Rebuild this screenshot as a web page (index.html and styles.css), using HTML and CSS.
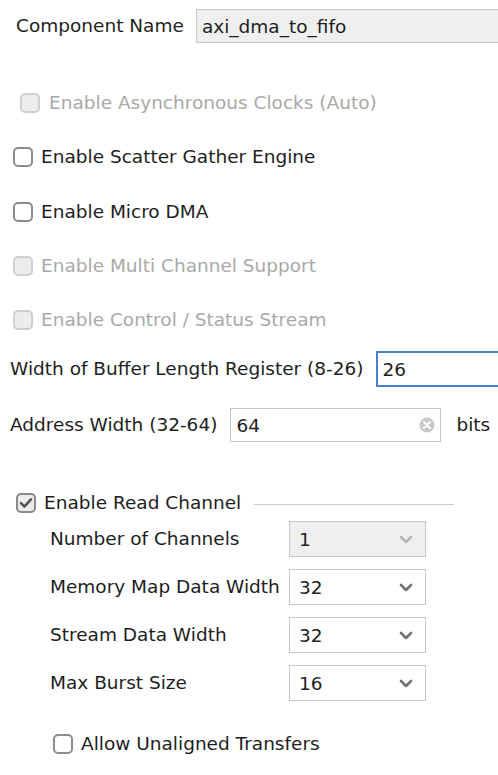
FILE: index.html
```html
<!DOCTYPE html>
<html>
<head>
<meta charset="utf-8">
<link rel="stylesheet" href="styles.css">
</head>
<body>
<div class="page">
  <div class="row name-row">
    <span class="label">Component Name</span>
    <div class="field name-field">axi_dma_to_fifo</div>
  </div>

  <div class="row check-row async">
    <span class="cb disabled"></span><span class="label disabled-text">Enable Asynchronous Clocks (Auto)</span>
  </div>
  <div class="row check-row scatter">
    <span class="cb"></span><span class="label">Enable Scatter Gather Engine</span>
  </div>
  <div class="row check-row micro">
    <span class="cb"></span><span class="label">Enable Micro DMA</span>
  </div>
  <div class="row check-row multi">
    <span class="cb disabled"></span><span class="label disabled-text">Enable Multi Channel Support</span>
  </div>
  <div class="row check-row control">
    <span class="cb disabled"></span><span class="label disabled-text">Enable Control / Status Stream</span>
  </div>

  <div class="row buffer-row">
    <span class="label">Width of Buffer Length Register (8-26)</span>
    <div class="field focus-field">26</div>
  </div>

  <div class="row addr-row">
    <span class="label">Address Width (32-64)</span>
    <div class="field addr-field">
      <span>64</span>
      <svg class="clear" width="16" height="16" viewBox="0 0 16 16"><circle cx="8" cy="8" r="7.5" fill="#c9c9c9"/><path d="M5 5 L11 11 M11 5 L5 11" stroke="#fff" stroke-width="2" stroke-linecap="round"/></svg>
    </div>
    <span class="label unit">bits</span>
  </div>

  <div class="row check-row read-row">
    <span class="cb checked"><svg width="20" height="20" viewBox="0 0 20 20"><path d="M5 10.2 L8.4 13.6 L15 6.4" fill="none" stroke="#555" stroke-width="2.6" stroke-linecap="round" stroke-linejoin="round"/></svg></span><span class="label">Enable Read Channel</span>
    <span class="rule"></span>
  </div>

  <div class="sub">
    <div class="row sel-row first">
      <span class="label sub-label">Number of Channels</span>
      <div class="select disabled-select"><span>1</span><svg class="chev" width="14" height="9" viewBox="0 0 14 9"><path d="M2 2 L7 7 L12 2" fill="none" stroke="#b4b4b4" stroke-width="2.6" stroke-linecap="round" stroke-linejoin="round"/></svg></div>
    </div>
    <div class="row sel-row">
      <span class="label sub-label">Memory Map Data Width</span>
      <div class="select"><span>32</span><svg class="chev" width="14" height="9" viewBox="0 0 14 9"><path d="M2 2 L7 7 L12 2" fill="none" stroke="#707070" stroke-width="2.6" stroke-linecap="round" stroke-linejoin="round"/></svg></div>
    </div>
    <div class="row sel-row">
      <span class="label sub-label">Stream Data Width</span>
      <div class="select"><span>32</span><svg class="chev" width="14" height="9" viewBox="0 0 14 9"><path d="M2 2 L7 7 L12 2" fill="none" stroke="#707070" stroke-width="2.6" stroke-linecap="round" stroke-linejoin="round"/></svg></div>
    </div>
    <div class="row sel-row">
      <span class="label sub-label">Max Burst Size</span>
      <div class="select"><span>16</span><svg class="chev" width="14" height="9" viewBox="0 0 14 9"><path d="M2 2 L7 7 L12 2" fill="none" stroke="#707070" stroke-width="2.6" stroke-linecap="round" stroke-linejoin="round"/></svg></div>
    </div>
    <div class="row check-row allow-row">
      <span class="cb"></span><span class="label">Allow Unaligned Transfers</span>
    </div>
  </div>
</div>
</body>
</html>
```

FILE: styles.css
```css
html, body {
  margin: 0;
  padding: 0;
  background: #ffffff;
  overflow: hidden;
}
body {
  width: 498px;
  height: 775px;
  font-family: "DejaVu Sans", Verdana, sans-serif;
  font-size: 18.5px;
  color: #1e1e1e;
}
.page {
  display: flex;
  flex-direction: column;
}
.row {
  display: flex;
  align-items: center;
  white-space: nowrap;
}
.label { line-height: 20px; }
.disabled-text { color: #a9a9a9; }

.name-row {
  margin-top: 9px;
  height: 34px;
  padding-left: 16px;
}
.field {
  box-sizing: border-box;
  display: flex;
  align-items: center;
  border: 1px solid #c6c6c6;
  background: #fff;
  padding-left: 5px;
}
.name-field {
  margin-left: 12px;
  flex: 1;
  height: 34px;
  background: #efefef;
  border-right: none;
}

.check-row { height: 20px; }
.cb {
  box-sizing: border-box;
  width: 20px;
  height: 20px;
  border: 2px solid #8c8c8c;
  border-radius: 5px;
  background: #fff;
  flex: none;
  margin-right: 8px;
  display: flex;
  align-items: center;
  justify-content: center;
}
.cb svg { display: block; margin: -2px; }
.cb.disabled {
  border-color: #cfcfcf;
  background: #ececec;
  margin-right: 9px;
}
.cb.checked {
  background: #ececec;
  border-color: #8a8a8a;
}
.async { margin-top: 50px; padding-left: 20px; }
.scatter { margin-top: 34px; padding-left: 13px; }
.micro { margin-top: 35px; padding-left: 13px; }
.multi { margin-top: 34px; padding-left: 13px; }
.control { margin-top: 34px; padding-left: 13px; }
.multi .cb.disabled, .control .cb.disabled { margin-right: 8px; }

.buffer-row {
  margin-top: 21px;
  height: 36px;
  padding-left: 10px;
}
.focus-field {
  margin-left: 12px;
  flex: 1;
  height: 36px;
  border: 2px solid #4a7fd3;
  border-right: none;
  padding-left: 5px;
}

.addr-row {
  margin-top: 21px;
  height: 34px;
  padding-left: 10px;
}
.addr-field {
  margin-left: 13px;
  width: 211px;
  height: 34px;
  flex: none;
  justify-content: space-between;
  padding-right: 5px;
}
.clear { display: block; }
.unit { margin-left: 15px; }

.read-row {
  margin-top: 51px;
  padding-left: 16px;
}
.rule {
  width: 200px;
  height: 1px;
  background: #cccccc;
  margin-left: 13px;
  margin-top: 2px;
}

.sub {
  display: flex;
  flex-direction: column;
  padding-left: 50px;
}
.sel-row {
  height: 36px;
  margin-top: 12px;
}
.sel-row.first { margin-top: 8px; }
.sub-label { width: 239px; flex: none; }
.select {
  box-sizing: border-box;
  width: 137px;
  height: 36px;
  border: 1px solid #c6c6c6;
  background: #fff;
  display: flex;
  align-items: center;
  justify-content: space-between;
  padding-left: 9px;
  padding-right: 12px;
}
.disabled-select { background: #efefef; }
.chev { display: block; }
.allow-row {
  margin-top: 33px;
  padding-left: 3px;
}
```
